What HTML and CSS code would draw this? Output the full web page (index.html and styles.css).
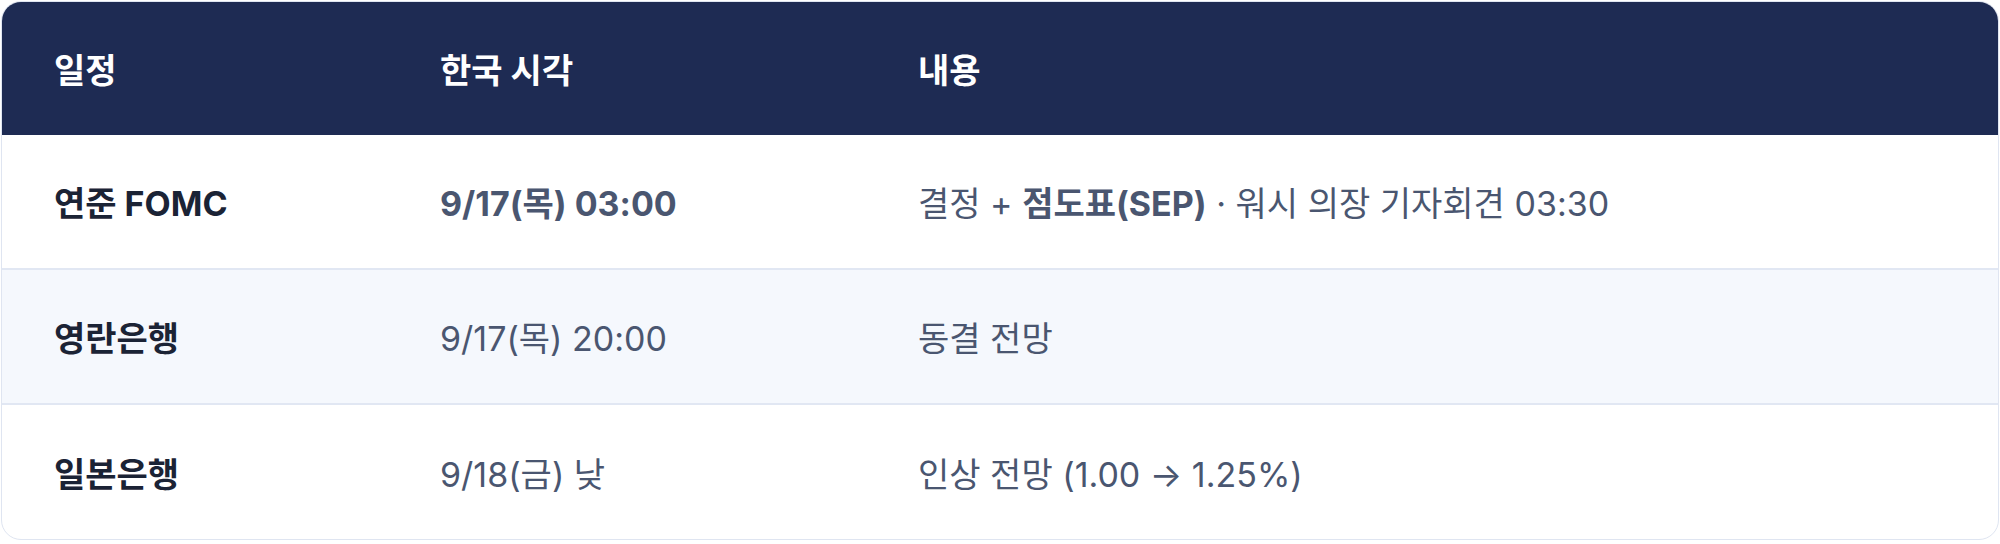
FILE: index.html
```html
<!DOCTYPE html>
<html lang="ko">
<head>
<meta charset="utf-8">
<title>일정</title>
<link rel="stylesheet" href="styles.css">
</head>
<body>
<div class="wrap">
  <div class="card">
    <div class="row head">
      <div class="cell">일정</div>
      <div class="cell">한국 시각</div>
      <div class="cell">내용</div>
    </div>
    <div class="row">
      <div class="cell name">연준 FOMC</div>
      <div class="cell time strong">9/17(목) 03:00</div>
      <div class="cell desc">결정 + <b>점도표(SEP)</b> · 워시 의장 기자회견 03:30</div>
    </div>
    <div class="row alt">
      <div class="cell name">영란은행</div>
      <div class="cell time">9/17(목) 20:00</div>
      <div class="cell desc">동결 전망</div>
    </div>
    <div class="row last">
      <div class="cell name">일본은행</div>
      <div class="cell time">9/18(금) 낮</div>
      <div class="cell desc">인상 전망 (1.00 → 1.25%)</div>
    </div>
  </div>
</div>
</body>
</html>
```

FILE: styles.css
```css
* { box-sizing: border-box; }
html, body { margin: 0; padding: 0; background: #ffffff; }
body { font-family: Inter, "Noto Sans CJK KR", sans-serif; }
.wrap { padding: 1px; }
.card {
  border: 1px solid #dfe5f1;
  border-radius: 20px;
  overflow: hidden;
  background: #ffffff;
}
.row {
  display: grid;
  grid-template-columns: 386px 478px 1fr;
  height: 135px;
  align-items: center;
  padding-left: 52px;
  border-bottom: 2px solid #e1e7f3;
  font-size: 34px;
  color: #4a5670;
}
.row.head {
  height: 133px;
  background: #1e2b53;
  color: #ffffff;
  font-weight: 700;
  border-bottom: none;
}
.row.alt { background: #f5f8fd; }
.row.last { border-bottom: none; height: 134px; }
.cell { white-space: nowrap; }
.name { color: #1b2335; font-weight: 700; }
.strong { font-weight: 700; }
.desc b { font-weight: 700; }
```
